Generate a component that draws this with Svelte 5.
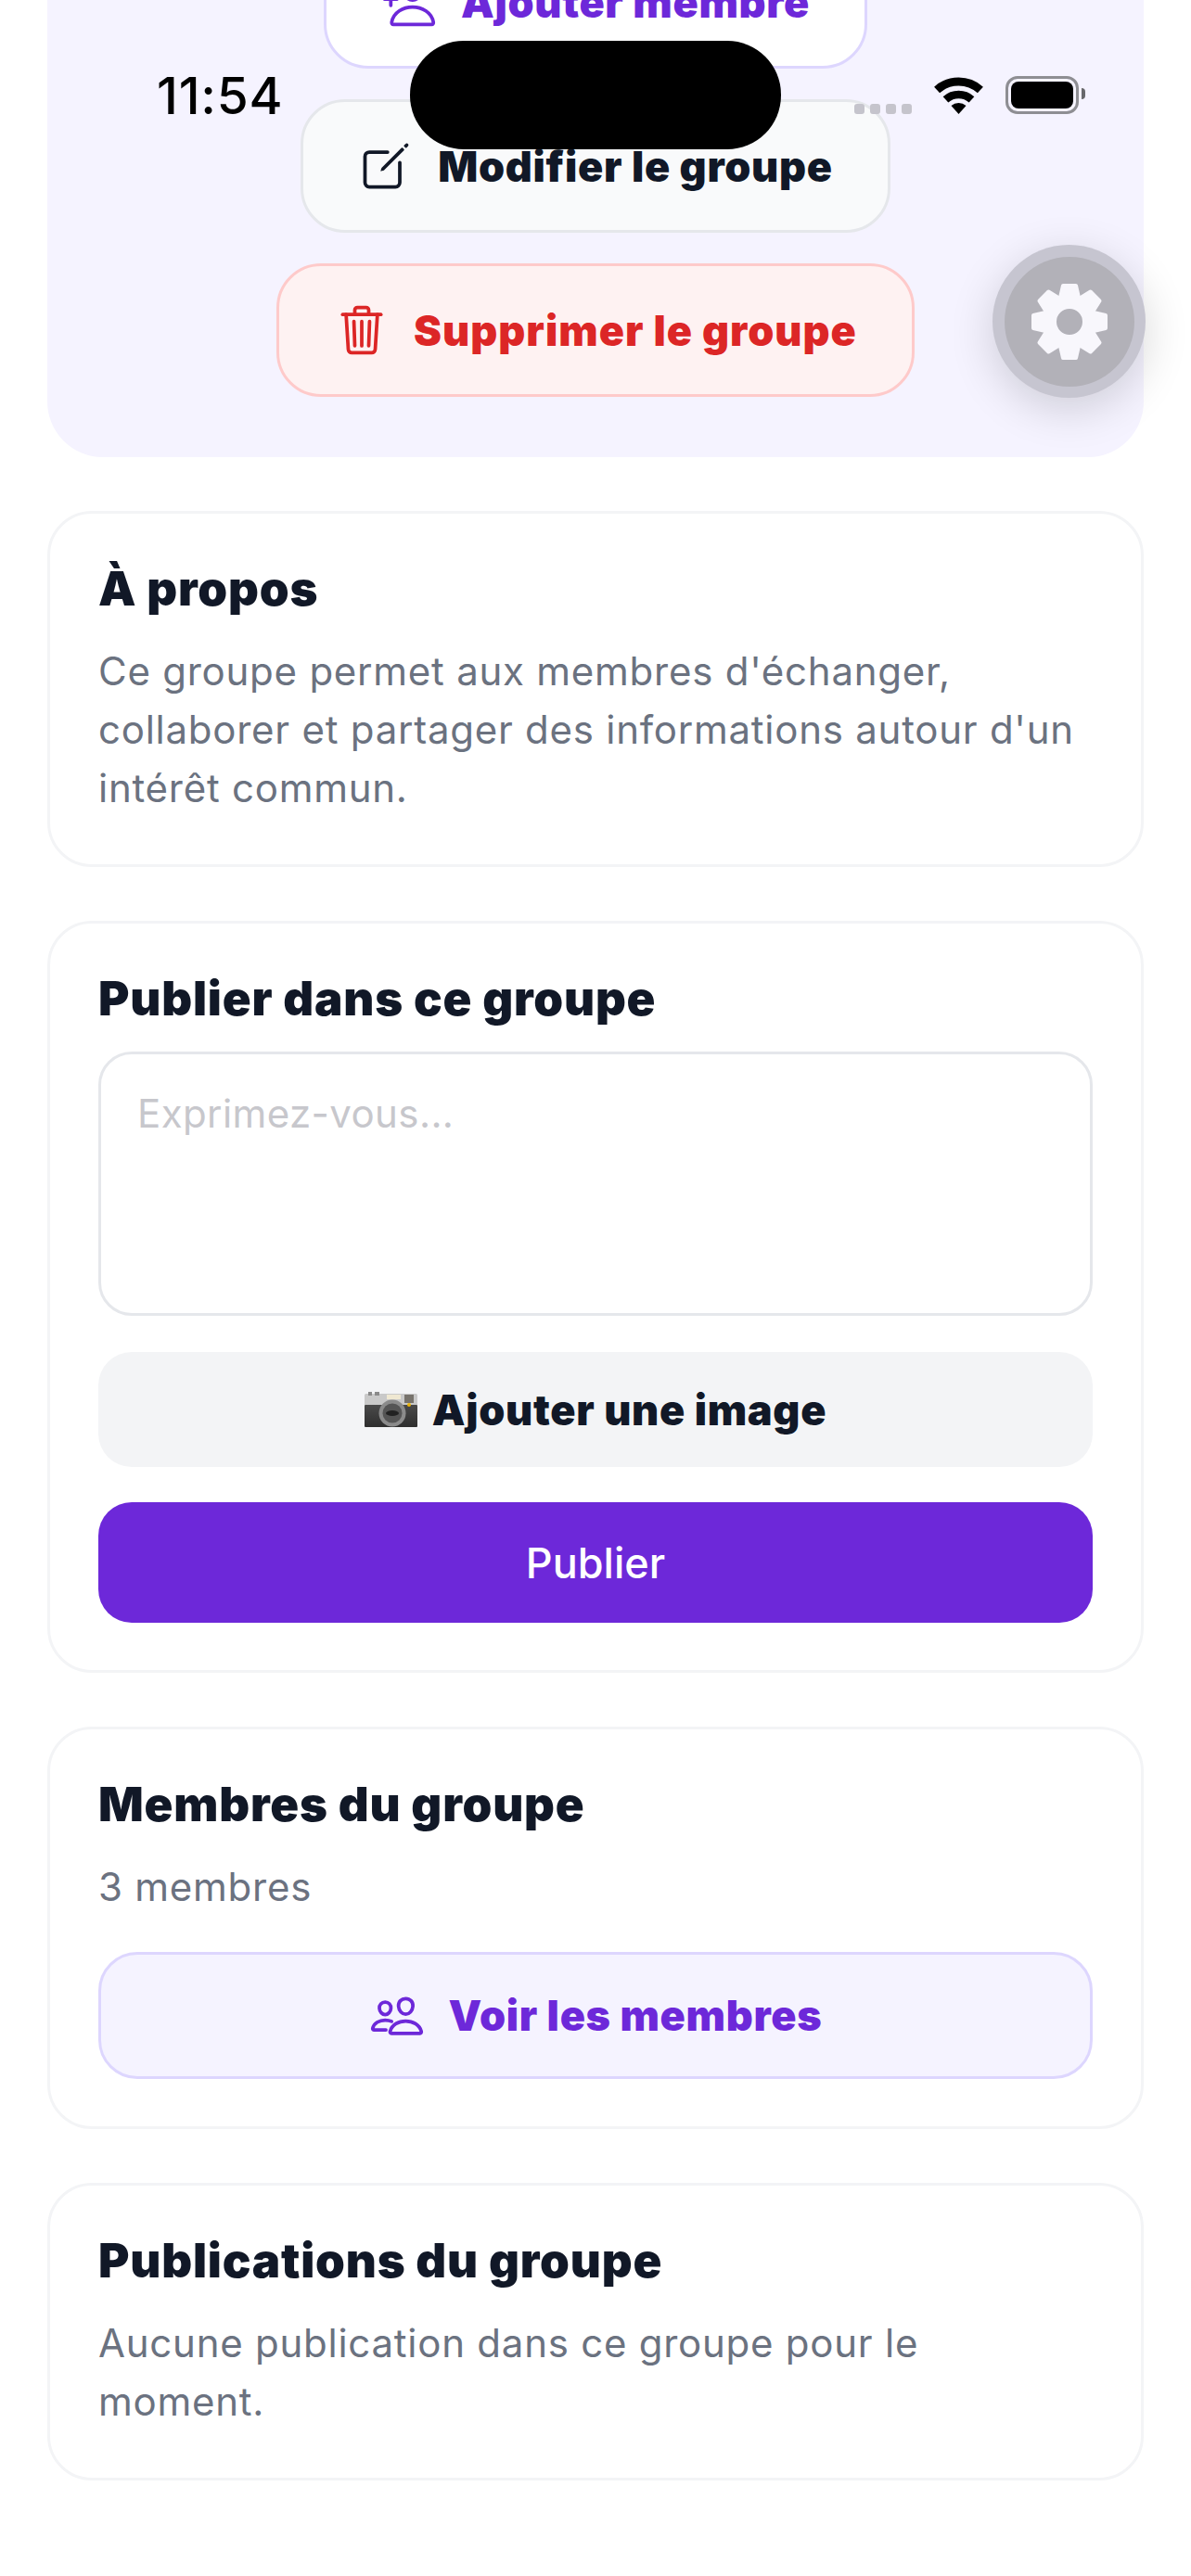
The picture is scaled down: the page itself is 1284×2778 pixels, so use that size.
<script>
    // dents de la roue du bouton flottant
    const gearTeeth = [0, 45, 90, 135, 180, 225, 270, 315];

    const aboutText = "Ce groupe permet aux membres d'échanger, collaborer et partager des informations autour d'un intérêt commun.";
    const memberCount = 3;
</script>

<div class="screen">
    <div class="page">
        <section class="hero">
            <button class="action action-add">
                <svg class="icon" viewBox="0 0 512 512" fill="none" stroke="currentColor" stroke-width="32" stroke-linecap="round" stroke-linejoin="round">
                    <path d="M376 144c-3.92 52.87-44 96-88 96s-84.15-43.12-88-96c-4-55 35-96 88-96s92 42 88 96z" />
                    <path d="M288 304c-87 0-175.3 48-191.64 138.6-2 10.92 4.21 21.4 15.65 21.4H464c11.44 0 17.62-10.48 15.65-21.4C463.3 352 375 304 288 304z" />
                    <path d="M88 176v112M144 232H32" />
                </svg>
                Ajouter membre
            </button>
            <button class="action action-edit">
                <svg class="icon" viewBox="0 0 512 512">
                    <path d="M384 224v184a40 40 0 01-40 40H104a40 40 0 01-40-40V168a40 40 0 0140-40h167.48" fill="none" stroke="currentColor" stroke-width="32" stroke-linecap="round" stroke-linejoin="round" />
                    <path fill="currentColor" d="M459.94 53.25a16.06 16.06 0 00-23.22-.56L424.35 65a8 8 0 000 11.31l11.34 11.32a8 8 0 0011.34 0l12.06-12c6.1-6.09 6.67-16.01.85-22.38zM399.34 90L218.82 270.2a9 9 0 00-2.31 3.93L208.16 299a3.91 3.91 0 004.86 4.86l24.85-8.35a9 9 0 003.93-2.31L422 112.66a9 9 0 000-12.66l-9.95-10a9 9 0 00-12.71 0z" />
                </svg>
                Modifier le groupe
            </button>
            <button class="action action-delete">
                <svg class="icon" viewBox="0 0 512 512" fill="none" stroke="currentColor" stroke-width="32" stroke-linecap="round" stroke-linejoin="round">
                    <path d="M112 112l20 320c.95 18.49 14.4 32 32 32h184c17.67 0 30.87-13.51 32-32l20-320" />
                    <path d="M80 112h352" />
                    <path d="M192 112V72h0a23.93 23.93 0 0124-24h80a23.93 23.93 0 0124 24h0v40M256 176v224M184 176l8 224M328 176l-8 224" />
                </svg>
                Supprimer le groupe
            </button>
        </section>

        <section class="card">
            <h2>À propos</h2>
            <p>{aboutText}</p>
        </section>

        <section class="card">
            <h2>Publier dans ce groupe</h2>
            <textarea placeholder="Exprimez-vous..."></textarea>
            <button class="image-button">
                <svg class="camera" viewBox="0 0 57 38">
                    <defs>
                        <linearGradient id="camBody" x1="0" y1="0" x2="0" y2="1">
                            <stop offset="0" stop-color="#4a4a4a" />
                            <stop offset="1" stop-color="#2e2e2e" />
                        </linearGradient>
                    </defs>
                    <rect x="0" y="2" width="57" height="13" rx="1.5" fill="#c9c9c9" />
                    <rect x="0" y="14" width="57" height="24" rx="1" fill="url(#camBody)" />
                    <rect x="4" y="0" width="4" height="4" fill="#8a8a8a" />
                    <rect x="11" y="0" width="5" height="4" fill="#8a8a8a" />
                    <rect x="24" y="3" width="15" height="5" fill="#efe8d2" />
                    <rect x="43" y="3" width="10" height="9" fill="#77736c" />
                    <circle cx="30" cy="23" r="14.5" fill="#8b8b8b" />
                    <circle cx="30" cy="23" r="10.5" fill="#555" />
                    <ellipse cx="30" cy="23" rx="7" ry="3" fill="#222" />
                    <circle cx="48" cy="14" r="2" fill="#eab308" />
                </svg>
                Ajouter une image
            </button>
            <button class="publish-button">Publier</button>
        </section>

        <section class="card">
            <h2>Membres du groupe</h2>
            <p>{memberCount} membres</p>
            <button class="members-button">
                <svg class="icon" viewBox="0 0 512 512" fill="none" stroke="currentColor" stroke-width="32" stroke-linecap="round" stroke-linejoin="round">
                    <path d="M402 168c-2.93 40.67-33.1 72-66 72s-63.12-31.32-66-72c-3-42.31 26.37-72 66-72s69 30.46 66 72z" />
                    <path d="M336 304c-65.17 0-127.84 32.37-143.54 95.41-2.08 8.34 3.15 16.59 11.72 16.59h263.65c8.57 0 13.77-8.25 11.72-16.59C463.85 336.37 401.18 304 336 304z" />
                    <path d="M200 185.94c-2.34 32.48-26.72 58.06-53 58.06s-50.7-25.57-53-58.06C91.61 152.15 115.34 128 147 128s55.39 24.77 53 57.94z" />
                    <path d="M206 306c-18.05-8.27-37.93-11.45-59-11.45-52 0-102.1 25.85-114.65 76.2-1.65 6.66 2.53 13.25 9.37 13.25H154" />
                </svg>
                Voir les membres
            </button>
        </section>

        <section class="card">
            <h2>Publications du groupe</h2>
            <p>Aucune publication dans ce groupe pour le moment.</p>
        </section>
    </div>

    <!-- barre d'état iOS, par-dessus le contenu -->
    <div class="status-time">11:54</div>
    <div class="island"></div>
    <div class="status-right">
        <div class="signal"><i></i><i></i><i></i><i></i></div>
        <svg class="wifi" viewBox="0 0 53 40" fill="none" stroke="#000">
            <path d="M3.1 14A35 35 0 0 1 49.9 14" stroke-width="9" />
            <path d="M12.5 24.4A21 21 0 0 1 40.5 24.4" stroke-width="8.5" />
            <path d="M26.5 40L18.5 31A12 12 0 0 1 34.5 31Z" fill="#000" stroke="none" />
        </svg>
        <div class="battery"><div class="battery-level"></div></div>
    </div>

    <!-- AssistiveTouch -->
    <div class="fab">
        <div class="fab-inner">
            <svg class="gear" viewBox="-44 -44 88 88">
                <circle r="21.5" fill="none" stroke="#f8f7fc" stroke-width="15" />
                {#each gearTeeth as angle}
                    <path d="M-7 -39L7 -39L10 -26L-10 -26Z" fill="#f8f7fc" stroke="#f8f7fc" stroke-width="4" stroke-linejoin="round" transform="rotate({angle})" />
                {/each}
            </svg>
        </div>
    </div>
</div>

<style>
    :global(body) {
        margin: 0;
        background: #fff;
    }
    .screen {
        position: relative;
        height: 2778px;
        overflow: hidden;
        font-family: Inter, "Noto Sans", sans-serif;
        color: #111827;
    }
    .page {
        display: flex;
        flex-direction: column;
        gap: 58px;
        margin-top: -130px;
        padding: 0 51px;
    }
    .hero {
        display: flex;
        flex-direction: column;
        align-items: center;
        gap: 33px;
        padding: 60px 0 65px;
        background: #f5f3ff;
        border-radius: 60px;
    }
    button {
        font-family: inherit;
        cursor: pointer;
    }
    .action {
        display: flex;
        align-items: center;
        justify-content: center;
        gap: 26px;
        height: 144px;
        padding: 0 59px;
        border-radius: 48px;
        border: 3px solid;
        font-size: 45px;
        font-weight: 900;
        letter-spacing: 0.7px;
    }
    .icon {
        width: 60px;
        height: 60px;
        flex-shrink: 0;
    }
    .action-add {
        background: #fff;
        border-color: #ddd6fe;
        color: #6d28d9;
    }
    .action-edit {
        background: #f9fafb;
        border-color: #e5e7eb;
        color: #111827;
    }
    .action-delete {
        background: #fef2f2;
        border-color: #fecaca;
        color: #dc2626;
        letter-spacing: 1px;
    }
    .card {
        display: flex;
        flex-direction: column;
        padding: 51px 52px;
        background: #fff;
        border: 3px solid #f3f4f6;
        border-radius: 48px;
    }
    h2 {
        margin: 0 0 27px;
        font-size: 51px;
        line-height: 60px;
        font-weight: 900;
        letter-spacing: 0.8px;
    }
    p {
        margin: 0;
        font-size: 42px;
        line-height: 63px;
        letter-spacing: 0.75px;
        color: #6b7280;
    }
    textarea {
        display: block;
        box-sizing: border-box;
        width: 100%;
        height: 285px;
        padding: 38px 39px;
        border: 3px solid #e5e7eb;
        border-radius: 36px;
        background: #fff;
        font-family: inherit;
        font-size: 42px;
        line-height: 51px;
        letter-spacing: 0.4px;
        resize: none;
        outline: none;
    }
    textarea::placeholder {
        color: #c7c7cc;
        opacity: 1;
    }
    .image-button {
        display: flex;
        align-items: center;
        justify-content: center;
        gap: 16px;
        height: 124px;
        margin-top: 39px;
        border: none;
        border-radius: 36px;
        background: #f3f4f6;
        color: #111827;
        font-size: 45px;
        font-weight: 900;
        letter-spacing: 0.7px;
    }
    .camera {
        width: 57px;
        height: 38px;
    }
    .publish-button {
        height: 130px;
        margin-top: 38px;
        border: none;
        border-radius: 36px;
        background: #6d28d9;
        color: #fff;
        font-size: 45px;
        font-weight: 500;
    }
    .members-button {
        display: flex;
        align-items: center;
        justify-content: center;
        gap: 26px;
        height: 137px;
        margin-top: 39px;
        border: 3px solid #ddd6fe;
        border-radius: 42px;
        background: #f5f3ff;
        color: #6d28d9;
        font-size: 45px;
        font-weight: 900;
        letter-spacing: 0.7px;
    }
    .status-time {
        position: absolute;
        top: 70px;
        left: 169px;
        font-size: 55px;
        line-height: 66px;
        font-weight: 500;
        letter-spacing: 0.8px;
        color: #000;
    }
    .island {
        position: absolute;
        top: 44px;
        left: 442px;
        width: 400px;
        height: 117px;
        border-radius: 58px;
        background: #000;
    }
    .status-right {
        position: absolute;
        top: 82px;
        left: 921px;
        width: 250px;
        height: 41px;
        display: flex;
        align-items: flex-end;
    }
    .signal {
        display: flex;
        gap: 6px;
        margin-right: 24px;
    }
    .signal i {
        width: 11px;
        height: 11px;
        border-radius: 3px;
        background: #c5c4cc;
    }
    .wifi {
        width: 53px;
        height: 40px;
        margin-right: 24px;
    }
    .battery {
        position: relative;
        box-sizing: border-box;
        width: 79px;
        height: 41px;
        padding: 3px;
        border: 3px solid #8e8e93;
        border-radius: 13px;
    }
    .battery::after {
        content: "";
        position: absolute;
        top: 10px;
        right: -10px;
        width: 4px;
        height: 12px;
        border-radius: 0 4px 4px 0;
        background: #68686c;
    }
    .battery-level {
        height: 100%;
        border-radius: 8px;
        background: #000;
    }
    .fab {
        position: absolute;
        top: 264px;
        left: 1070px;
        display: flex;
        align-items: center;
        justify-content: center;
        width: 165px;
        height: 165px;
        border-radius: 50%;
        background: #c6c5d0;
        box-shadow: 0 12px 48px rgba(0, 0, 0, 0.16);
    }
    .fab-inner {
        display: flex;
        align-items: center;
        justify-content: center;
        width: 140px;
        height: 140px;
        border-radius: 50%;
        background: #b2b1b8;
    }
    .gear {
        width: 88px;
        height: 88px;
    }
</style>
